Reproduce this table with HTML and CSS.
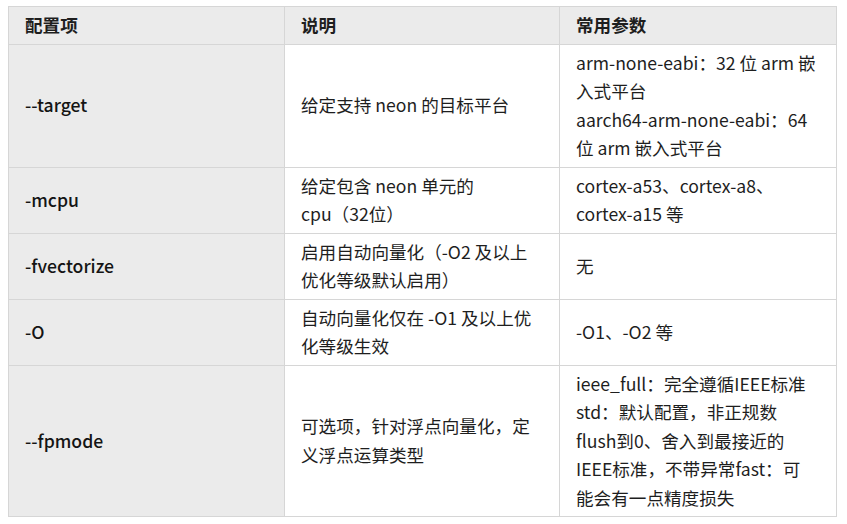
FILE: index.html
```html
<!DOCTYPE html>
<html lang="zh-CN">
<head>
<meta charset="utf-8">
<link rel="stylesheet" href="styles.css">
</head>
<body>
<table class="cfg">
  <colgroup><col class="c1"><col class="c2"><col class="c3"></colgroup>
  <thead>
    <tr><th>配置项</th><th>说明</th><th>常用参数</th></tr>
  </thead>
  <tbody>
    <tr>
      <td class="key">--target</td>
      <td>给定支持 neon 的目标平台</td>
      <td>arm-none-eabi：32 位 arm 嵌<br>入式平台<br>aarch64-arm-none-eabi：64<br>位 arm 嵌入式平台</td>
    </tr>
    <tr>
      <td class="key">-mcpu</td>
      <td>给定包含 neon 单元的<br>cpu（32位）</td>
      <td>cortex-a53、cortex-a8、<br>cortex-a15 等</td>
    </tr>
    <tr>
      <td class="key">-fvectorize</td>
      <td>启用自动向量化（-O2 及以上<br>优化等级默认启用）</td>
      <td>无</td>
    </tr>
    <tr>
      <td class="key">-O</td>
      <td>自动向量化仅在 -O1 及以上优<br>化等级生效</td>
      <td>-O1、-O2 等</td>
    </tr>
    <tr>
      <td class="key">--fpmode</td>
      <td>可选项，针对浮点向量化，定<br>义浮点运算类型</td>
      <td>ieee_full：完全遵循IEEE标准<br>std：默认配置，非正规数<br>flush到0、舍入到最接近的<br>IEEE标准，不带异常fast：可<br>能会有一点精度损失</td>
    </tr>
  </tbody>
</table>
</body>
</html>
```
FILE: styles.css
```css
html, body {
  margin: 0;
  padding: 0;
  background: #ffffff;
}
body {
  padding: 6px 8px;
  font-family: "Noto Sans CJK SC", "Noto Sans", sans-serif;
  font-size: 17.6px;
  line-height: 28.5px;
  color: #1e1e1e;
}
.cfg {
  border-collapse: collapse;
  table-layout: fixed;
  width: 828px;
}
.c1 { width: 276px; }
.c2 { width: 275px; }
.c3 { width: 277px; }
.cfg th,
.cfg td {
  border: 1px solid #d6d6d6;
  padding: 4px 16px;
  text-align: left;
  vertical-align: middle;
  white-space: nowrap;
}
.cfg th {
  background: #ebebeb;
  font-weight: 700;
}
.cfg td.key {
  background: #ebebeb;
  font-weight: 500;
  color: #141414;
}
```
